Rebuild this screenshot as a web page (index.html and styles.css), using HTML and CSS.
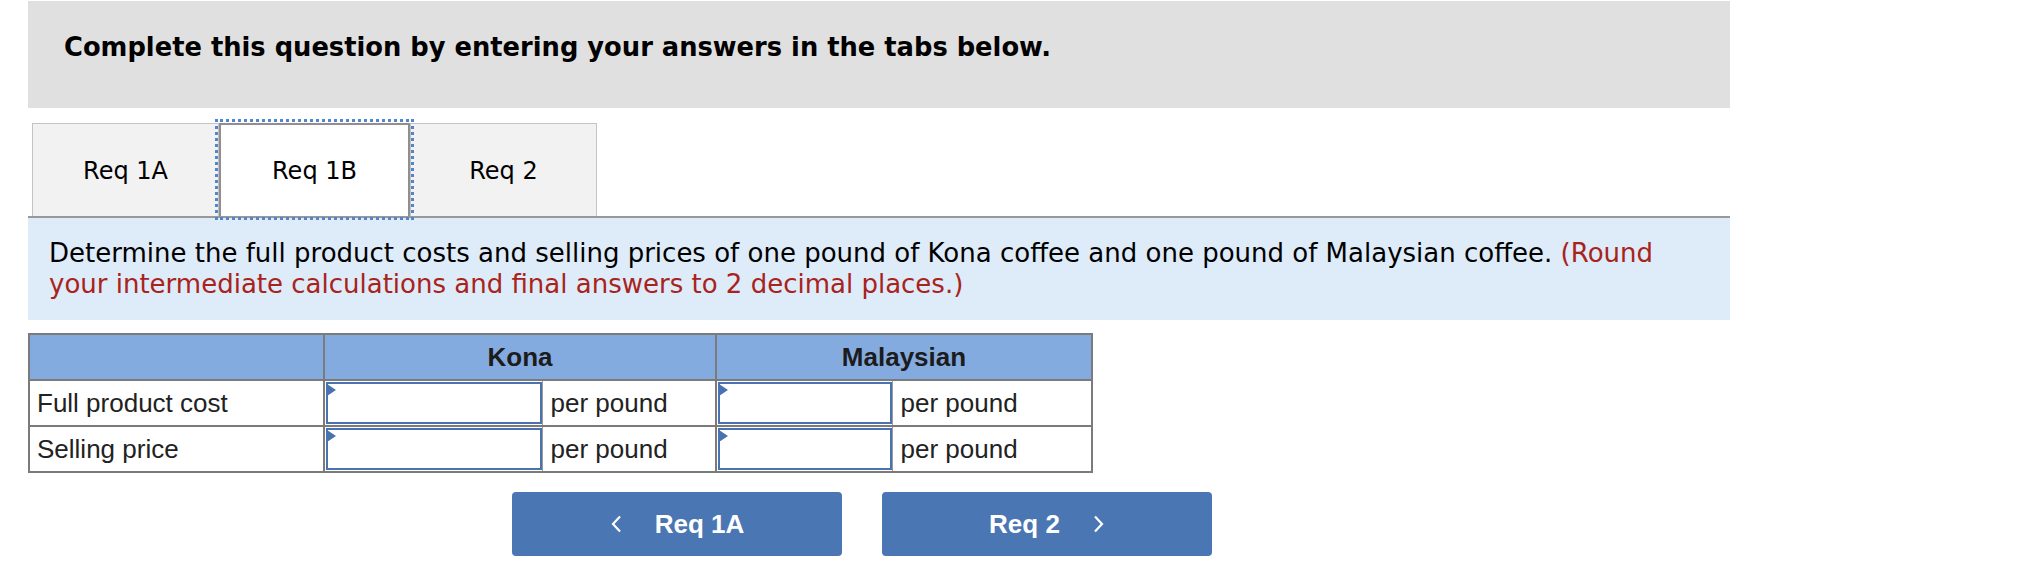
FILE: index.html
```html
<!DOCTYPE html>
<html lang="en">
<head>
<meta charset="utf-8">
<title>Req 1B</title>
<link rel="stylesheet" href="styles.css">
</head>
<body>
<div class="page">
  <div class="banner">
    <h2 class="banner-title">Complete this question by entering your answers in the tabs below.</h2>
  </div>
  <div class="tabs">
    <div class="tab">Req 1A</div>
    <div class="tab active">Req 1B</div>
    <div class="tab">Req 2</div>
  </div>
  <div class="panel">
    <p class="panel-text">Determine the full product costs and selling prices of one pound of Kona coffee and one pound of Malaysian coffee. <span class="hint">(Round your intermediate calculations and final answers to 2 decimal places.)</span></p>
  </div>
  <table class="grid">
    <colgroup>
      <col class="c-label">
      <col class="c-in1">
      <col class="c-unit1">
      <col class="c-in2">
      <col class="c-unit2">
    </colgroup>
    <thead>
      <tr>
        <th class="head"></th>
        <th class="head" colspan="2">Kona</th>
        <th class="head" colspan="2">Malaysian</th>
      </tr>
    </thead>
    <tbody>
      <tr>
        <td class="label">Full product cost</td>
        <td class="incell"><div class="inp"></div></td>
        <td class="unit">per pound</td>
        <td class="incell"><div class="inp"></div></td>
        <td class="unit">per pound</td>
      </tr>
      <tr>
        <td class="label">Selling price</td>
        <td class="incell"><div class="inp"></div></td>
        <td class="unit">per pound</td>
        <td class="incell"><div class="inp"></div></td>
        <td class="unit">per pound</td>
      </tr>
    </tbody>
  </table>
  <div class="nav">
    <div class="navbtn">
      <svg class="chev" width="12" height="18" viewBox="0 0 12 18"><polyline points="10,1.5 3,9 10,16.5" fill="none" stroke="#ffffff" stroke-width="2.2"/></svg>
      <span>Req 1A</span>
    </div>
    <div class="navbtn">
      <span>Req 2</span>
      <svg class="chev" width="12" height="18" viewBox="0 0 12 18"><polyline points="2,1.5 9,9 2,16.5" fill="none" stroke="#ffffff" stroke-width="2.2"/></svg>
    </div>
  </div>
</div>
</body>
</html>
```

FILE: styles.css
```css
* { box-sizing: border-box; }
html, body { margin: 0; padding: 0; background: #ffffff; }
body { font-family: "DejaVu Sans", Verdana, sans-serif; color: #000; }

.page {
  padding-left: 28px;
  width: 1730px;
}

.banner {
  margin-top: 1px;
  height: 107px;
  background: #e0e0e0;
  padding: 31px 0 0 36px;
}
.banner-title {
  margin: 0;
  font-size: 25.75px;
  line-height: 30px;
  font-weight: bold;
  color: #000;
}

.tabs {
  margin-top: 15px;
  display: flex;
  padding-left: 4px;
  border-bottom: 2px solid #999999;
}
.tab {
  width: 187px;
  height: 93px;
  background: #f2f2f2;
  border: 1px solid #c4c4c4;
  border-bottom: none;
  display: flex;
  align-items: center;
  justify-content: center;
  font-size: 24px;
  padding-top: 1px;
  color: #000;
}
.tab.active {
  width: 191px;
  background: #ffffff;
  border: 2px solid #8f8f8f;
  border-bottom: none;
  outline: 3px dotted #5484cb;
  outline-offset: 1px;
  position: relative;
  z-index: 1;
}

.panel {
  background: #deebf8;
  height: 102px;
  padding: 20px 21px 0 21px;
}
.panel-text {
  margin: 0;
  font-size: 26px;
  line-height: 31px;
  color: #000;
}
.hint { color: #a8231b; }

.grid {
  margin-top: 13px;
  border-collapse: collapse;
  table-layout: fixed;
  width: 1063px;
  border: 2px solid #7b7b7b;
  font-family: "Liberation Sans", Arial, sans-serif;
  font-size: 26px;
  color: #222;
}
.c-label { width: 295px; }
.c-in1 { width: 218px; }
.c-unit1 { width: 174px; }
.c-in2 { width: 176px; }
.c-unit2 { width: 200px; }

.grid th, .grid td {
  height: 46px;
  padding: 0;
  border: 2px solid #7b7b7b;
}
.head {
  background: #84abe0;
  font-weight: bold;
  text-align: center;
  color: #1c1c1c;
}
.label {
  padding-left: 7px !important;
}
.incell {
  padding: 1px 0 1px 1px !important;
  border-right: none !important;
}
.unit {
  border-left: 1px solid #9a9a9a !important;
  padding-left: 8px !important;
}
.inp {
  position: relative;
  height: 42px;
  border: 2px solid #4a72b0;
  background: #fff;
}
.inp::before {
  content: "";
  position: absolute;
  left: -1px;
  top: 0;
  border-left: 9px solid #4a72b0;
  border-top: 6px solid transparent;
  border-bottom: 6px solid transparent;
}

.nav {
  margin-top: 19px;
  margin-left: 484px;
  display: flex;
  gap: 40px;
}
.navbtn {
  width: 330px;
  height: 64px;
  background: #4a76b4;
  border-radius: 4px;
  display: flex;
  align-items: center;
  justify-content: center;
  gap: 33px;
  color: #ffffff;
  font-family: "Liberation Sans", Arial, sans-serif;
  font-weight: bold;
  font-size: 26px;
}
.chev { display: block; }
```
